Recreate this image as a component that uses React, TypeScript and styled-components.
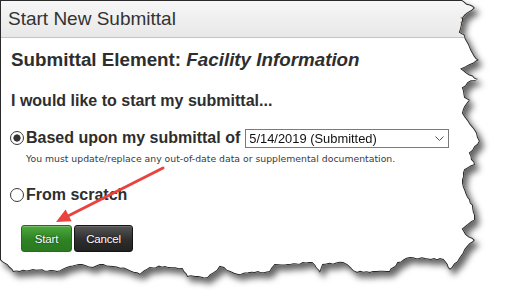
import React from "react";
import styled, { createGlobalStyle } from "styled-components";

const Global = createGlobalStyle`
  html, body { margin: 0; padding: 0; background: #ffffff; }
  body { font-family: "Liberation Sans", Arial, sans-serif; color: #333; }
`;

type Pt = [number, number];

const DIALOG_W = 490;
const DIALOG_H = 285;

const basePoints: Pt[] = [
  [0, 0], [462, 0], [475, 8], [468, 13], [463, 18], [462, 24], [460, 32], [465, 35],
  [467, 41], [470, 47], [473, 53], [479, 60], [470, 65], [462, 69], [467, 73], [478, 79],
  [468, 83], [463, 88], [465, 97], [470, 100], [465, 107], [463, 113], [468, 120], [473, 127],
  [477, 133], [480, 141], [475, 147], [470, 153], [475, 165], [465, 170], [463, 183], [468, 197],
  [473, 205], [475, 215], [475, 220], [468, 225], [463, 229], [466, 234], [475, 240], [470, 244],
  [465, 250], [458, 262], [450, 270], [443, 260], [425, 259], [410, 258], [398, 263], [390, 272],
  [373, 272], [357, 273], [350, 268], [343, 263], [323, 265], [320, 273], [312, 263], [288, 265],
  [275, 265], [270, 272], [255, 273], [238, 275], [230, 272], [220, 267], [214, 273], [208, 278],
  [195, 277], [187, 277], [182, 269], [165, 267], [150, 268], [140, 275], [127, 270], [113, 267],
  [100, 265], [93, 268], [82, 265], [67, 268], [57, 272], [33, 270], [13, 272], [7, 265],
  [2, 262], [0, 260],
];

function jagged(points: Pt[]): Pt[] {
  let seed = 11;
  const rnd = () => {
    seed = (seed * 9301 + 49297) % 233280;
    return seed / 233280;
  };
  const out: Pt[] = [];
  for (let i = 0; i < points.length; i++) {
    const a = points[i];
    const b = points[(i + 1) % points.length];
    out.push(a);
    const straight = (a[1] === 0 && b[1] === 0) || (a[0] === 0 && b[0] === 0);
    if (straight) continue;
    const dx = b[0] - a[0];
    const dy = b[1] - a[1];
    const len = Math.hypot(dx, dy);
    const n = Math.floor(len / 3);
    const px = -dy / (len || 1);
    const py = dx / (len || 1);
    for (let k = 1; k < n; k++) {
      const t = k / n;
      const j = (rnd() - 0.5) * 1.8;
      out.push([
        Math.round((a[0] + dx * t + px * j) * 10) / 10,
        Math.round((a[1] + dy * t + py * j) * 10) / 10,
      ]);
    }
  }
  return out;
}

const tornPoints = jagged(basePoints);
const clipValue = `polygon(${tornPoints.map(([x, y]) => `${x}px ${y}px`).join(", ")})`;
const svgPoints = tornPoints.map(([x, y]) => `${x},${y}`).join(" ");

const Frame = styled.div`
  position: relative;
  width: 505px;
  height: 305px;
  overflow: hidden;
  filter: drop-shadow(4px 5px 3px rgba(0, 0, 0, 0.6));
`;

const Dialog = styled.div<{ $clip: string }>`
  position: relative;
  width: ${DIALOG_W}px;
  height: ${DIALOG_H}px;
  background: #ffffff;
  clip-path: ${(p) => p.$clip};
  display: flex;
  flex-direction: column;
`;

const Outline = styled.svg`
  position: absolute;
  left: 0;
  top: 0;
  pointer-events: none;
`;

const TitleBar = styled.div`
  box-sizing: border-box;
  height: 38px;
  padding: 1px 0 0 8px;
  display: flex;
  align-items: center;
  background: linear-gradient(#f7f7f7, #e8e8e8);
  border-bottom: 1px solid #c4c4c4;
`;

const Title = styled.span`
  font-size: 19px;
  font-weight: normal;
  color: #333;
`;

const Close = styled.span`
  margin-left: auto;
  margin-right: 22px;
  font-size: 15px;
  color: #8a8a8a;
`;

const Body = styled.div`
  display: flex;
  flex-direction: column;
  padding: 11px 0 0 11px;
`;

const Heading = styled.div`
  font-size: 18.8px;
  line-height: 22px;
  font-weight: bold;
  color: #2e2e2e;
  em { font-style: italic; }
`;

const Prompt = styled.div`
  margin-top: 20px;
  font-size: 16px;
  line-height: 20px;
  font-weight: bold;
  color: #2e2e2e;
`;

const OptionRow = styled.label<{ $mt: number }>`
  margin-top: ${(p) => p.$mt}px;
  height: 20px;
  display: flex;
  align-items: center;
`;

const Radio = styled.input`
  appearance: none;
  box-sizing: border-box;
  width: 14px;
  height: 14px;
  margin: 0 2px 0 -1px;
  border: 1px solid #3a3a3a;
  border-radius: 50%;
  background: #fff;
  &:checked {
    background: radial-gradient(circle, #333 0 3.3px, #fff 3.9px);
  }
`;

const OptionText = styled.span`
  font-size: 16px;
  line-height: 20px;
  font-weight: bold;
  color: #2e2e2e;
`;

const SelectWrap = styled.span`
  position: relative;
  margin-left: 5px;
  display: inline-flex;
`;

const Select = styled.select`
  appearance: none;
  box-sizing: border-box;
  width: 204px;
  height: 19px;
  padding: 0 0 0 3px;
  border: 1px solid #7a7a7a;
  border-radius: 0;
  background: #fff;
  font-family: "Liberation Sans", Arial, sans-serif;
  font-size: 12.9px;
  color: #111;
  outline: none;
`;

const Chevron = styled.svg`
  position: absolute;
  right: 5px;
  top: 7px;
  pointer-events: none;
`;

const Note = styled.div`
  margin-top: 5px;
  margin-left: 15px;
  font-family: "DejaVu Sans", Verdana, sans-serif;
  font-size: 9.3px;
  line-height: 12px;
  color: #3a3a3a;
`;

const Actions = styled.div`
  margin-top: 20px;
  padding-left: 10px;
  display: flex;
  gap: 2px;
`;

const Button = styled.button<{ $variant: "primary" | "dark"; $w: number }>`
  box-sizing: border-box;
  width: ${(p) => p.$w}px;
  height: 27px;
  padding: 0;
  border-radius: 3px;
  font-family: "Liberation Sans", Arial, sans-serif;
  font-size: 11.5px;
  letter-spacing: -0.2px;
  color: #fff;
  text-shadow: 0 0 2px rgba(0, 0, 0, 0.7);
  cursor: pointer;
  border: 1px solid ${(p) => (p.$variant === "primary" ? "#276a1c" : "#141414")};
  background: ${(p) =>
    p.$variant === "primary"
      ? "linear-gradient(#4ea93d, #2f8324 55%, #2a7a1f)"
      : "linear-gradient(#555555, #2e2e2e 55%, #222222)"};
  box-shadow: inset 0 1px 0 ${(p) => (p.$variant === "primary" ? "rgba(255,255,255,0.25)" : "rgba(255,255,255,0.15)")};
`;

const Arrow = styled.svg`
  position: absolute;
  left: 0;
  top: 0;
  pointer-events: none;
`;

export default function App() {
  return (
    <>
      <Global />
      <Frame>
        <Dialog $clip={clipValue}>
          <TitleBar>
            <Title>Start New Submittal</Title>
            <Close>×</Close>
          </TitleBar>
          <Body>
            <Heading>
              Submittal Element: <em>Facility Information</em>
            </Heading>
            <Prompt>I would like to start my submittal...</Prompt>
            <OptionRow $mt={17}>
              <Radio type="radio" name="startFrom" defaultChecked />
              <OptionText>Based upon my submittal of</OptionText>
              <SelectWrap>
                <Select defaultValue="2019-05-14">
                  <option value="2019-05-14">5/14/2019 (Submitted)</option>
                </Select>
                <Chevron width="9" height="5" viewBox="0 0 9 5">
                  <polyline points="0.5,0.5 4.5,4.5 8.5,0.5" fill="none" stroke="#555" strokeWidth="1" />
                </Chevron>
              </SelectWrap>
            </OptionRow>
            <Note>You must update/replace any out-of-date data or supplemental documentation.</Note>
            <OptionRow $mt={20}>
              <Radio type="radio" name="startFrom" />
              <OptionText>From scratch</OptionText>
            </OptionRow>
            <Actions>
              <Button $variant="primary" $w={51}>Start</Button>
              <Button $variant="dark" $w={59}>Cancel</Button>
            </Actions>
          </Body>
          <Outline width={DIALOG_W} height={DIALOG_H} viewBox={`0 0 ${DIALOG_W} ${DIALOG_H}`}>
            <polygon points={svgPoints} fill="none" stroke="#2a2a2a" strokeWidth="2" />
          </Outline>
        </Dialog>
        <Arrow width="505" height="305" viewBox="0 0 505 305">
          <line x1="163" y1="168" x2="69" y2="215.5" stroke="#e8433f" strokeWidth="3" strokeLinecap="round" />
          <polygon points="56,222 71.6,221.3 65.6,209.6" fill="#e8433f" />
        </Arrow>
      </Frame>
    </>
  );
}
